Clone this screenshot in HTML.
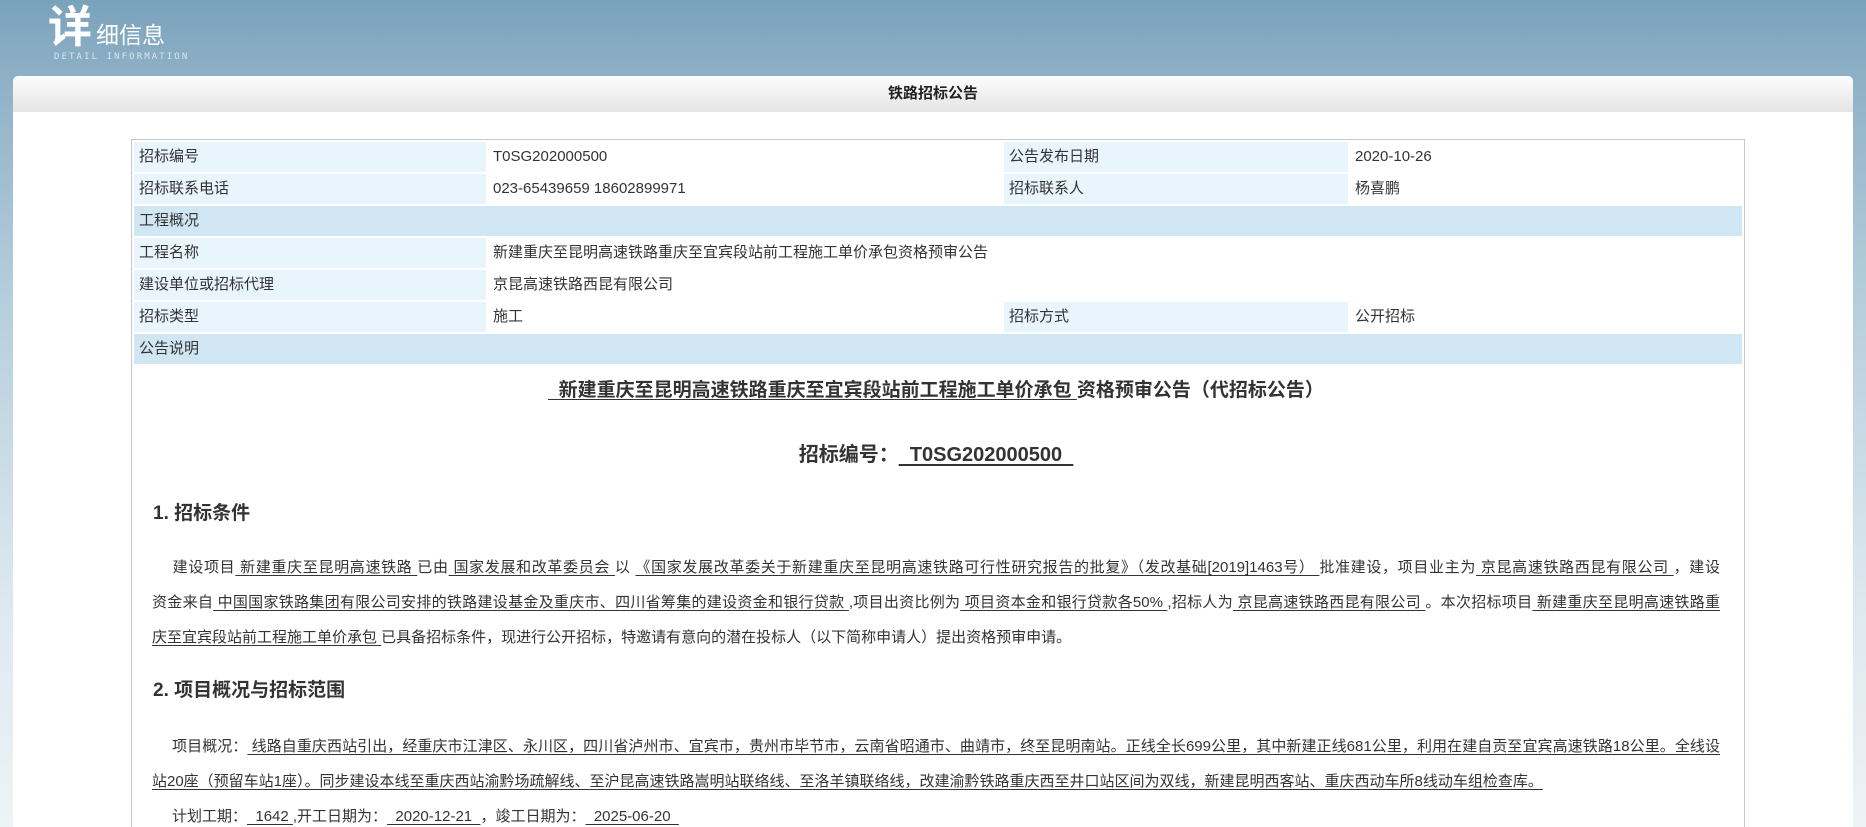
<!DOCTYPE html>
<html><head><meta charset="utf-8">
<style>
*{margin:0;padding:0;box-sizing:border-box}
html,body{width:1866px;height:827px;overflow:hidden}
body{background:linear-gradient(180deg,#7aa2bc 0px,#8fb1c7 80px,#b6cedc 300px,#dde8ef 600px,#eef3f6 827px);font-family:"Liberation Sans","Noto Sans CJK SC",sans-serif;color:#333;position:relative}
.logo{position:absolute;left:48px;top:3px;color:#fff}
.logo .big{font-size:44px;font-weight:bold;position:absolute;left:0;top:0;line-height:50px}
.logo .sm{font-size:23px;position:absolute;left:48px;top:17px;white-space:nowrap;line-height:30px}
.logo .en{font-size:9px;letter-spacing:2.1px;position:absolute;left:6px;top:49px;white-space:nowrap;color:#d8e6ef;font-family:"DejaVu Sans Mono",monospace}
.sky{position:absolute;bottom:0;background:rgba(210,225,235,.45)}
.panel{position:absolute;left:13px;top:76px;width:1840px;height:751px;background:#fff;border-radius:5px 5px 0 0;overflow:hidden}
.bar{height:36px;background:linear-gradient(180deg,#fdfdfd,#e4e4e4);border-radius:5px 5px 0 0;text-align:center;font-size:15px;font-weight:bold;line-height:36px;color:#222}
.frame{position:absolute;left:118px;top:63px;width:1614px;height:688px;border:1px solid #c8c8c8;border-bottom:none}
table{position:absolute;left:0;top:0;width:1612px;border-spacing:2px;font-size:15px}
td{height:30px;padding:0 5px;vertical-align:middle;line-height:18px}
td.l{background:#e9f5fc}
td.s{background:#d0e6f3}
.c{position:absolute;left:139px;top:0;width:1568px;height:740px;font-size:15px}
.line{height:35px;line-height:35px;text-align:justify;text-align-last:justify;white-space:nowrap}
.nl{text-align-last:auto;text-align:left}
.ind{display:inline-block;width:20px}
u{text-underline-offset:3px}
h1{font-size:19px;text-align:center;position:absolute;left:0;width:1568px;line-height:26px}
h2{font-size:19px;position:absolute;left:1px;line-height:26px}
</style></head><body>
<div class="logo"><span class="big">详</span><span class="sm">细信息</span><span class="en">DETAIL INFORMATION</span></div>
<div class="sky" style="left:1620px;width:8px;height:40px"></div>
<div class="sky" style="left:1640px;width:14px;height:55px"></div>
<div class="sky" style="left:1662px;width:10px;height:35px"></div>
<div class="sky" style="left:1680px;width:26px;height:75px"></div>
<div class="sky" style="left:1712px;width:12px;height:60px"></div>
<div class="sky" style="left:1730px;width:36px;height:92px"></div>
<div class="sky" style="left:1770px;width:14px;height:72px"></div>
<div class="sky" style="left:1790px;width:12px;height:50px"></div>
<div class="panel">
<div class="bar">铁路招标公告</div>
<div class="frame">
<table>
<tr><td class="l" style="width:352px">招标编号</td><td style="width:514px">T0SG202000500</td><td class="l" style="width:344px">公告发布日期</td><td>2020-10-26</td></tr>
<tr><td class="l">招标联系电话</td><td>023-65439659 18602899971</td><td class="l">招标联系人</td><td>杨喜鹏</td></tr>
<tr><td class="s" colspan="4">工程概况</td></tr>
<tr><td class="l">工程名称</td><td colspan="3">新建重庆至昆明高速铁路重庆至宜宾段站前工程施工单价承包资格预审公告</td></tr>
<tr><td class="l">建设单位或招标代理</td><td colspan="3">京昆高速铁路西昆有限公司</td></tr>
<tr><td class="l">招标类型</td><td>施工</td><td class="l">招标方式</td><td>公开招标</td></tr>
<tr><td class="s" colspan="4">公告说明</td></tr>
</table>
</div>
<div class="c">
<h1 style="top:302px"><u>&nbsp; 新建重庆至昆明高速铁路重庆至宜宾段站前工程施工单价承包 </u>资格预审公告（代招标公告）</h1>
<h1 style="top:366px;font-size:20px">招标编号：<u>&nbsp; T0SG202000500 &nbsp;</u></h1>
<h2 style="top:425px">1. 招标条件</h2>
<div style="position:absolute;top:474px;left:0;width:1568px">
<div class="line"><span class="ind"></span>建设项目<u> 新建重庆至昆明高速铁路 </u>已由<u> 国家发展和改革委员会 </u> 以 <u> 《国家发展改革委关于新建重庆至昆明高速铁路可行性研究报告的批复》（发改基础[2019]1463号） </u> 批准建设，项目业主为<u> 京昆高速铁路西昆有限公司 </u>，建设</div>
<div class="line">资金来自<u> 中国国家铁路集团有限公司安排的铁路建设基金及重庆市、四川省筹集的建设资金和银行贷款 </u>,项目出资比例为<u> 项目资本金和银行贷款各50% </u>,招标人为<u> 京昆高速铁路西昆有限公司 </u>。本次招标项目<u> 新建重庆至昆明高速铁路重</u></div>
<div class="line nl"><u>庆至宜宾段站前工程施工单价承包 </u>已具备招标条件，现进行公开招标，特邀请有意向的潜在投标人（以下简称申请人）提出资格预审申请。</div>
</div>
<h2 style="top:602px">2. 项目概况与招标范围</h2>
<div style="position:absolute;top:653px;left:0;width:1568px">
<div class="line"><span class="ind"></span>项目概况：<u> 线路自重庆西站引出，经重庆市江津区、永川区，四川省泸州市、宜宾市，贵州市毕节市，云南省昭通市、曲靖市，终至昆明南站。正线全长699公里，其中新建正线681公里，利用在建自贡至宜宾高速铁路18公里。全线设</u></div>
<div class="line nl"><u>站20座（预留车站1座）。同步建设本线至重庆西站渝黔场疏解线、至沪昆高速铁路嵩明站联络线、至洛羊镇联络线，改建渝黔铁路重庆西至井口站区间为双线，新建昆明西客站、重庆西动车所8线动车组检查库。 </u></div>
<div class="line nl" style="height:13px;overflow:visible"><span class="ind"></span>计划工期：<u>&nbsp; 1642 </u>,开工日期为：<u>&nbsp; 2020-12-21 &nbsp;</u>，竣工日期为：<u>&nbsp; 2025-06-20 &nbsp;</u></div>
</div>
</div>
</div>
</body></html>
